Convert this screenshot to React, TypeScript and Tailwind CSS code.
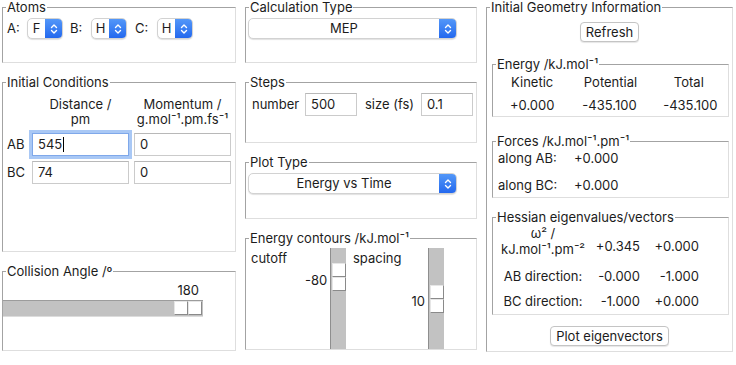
import { clsx } from 'clsx';
import type { ReactNode } from 'react';

const Frame = ({ title, className, children }: { title: ReactNode; className?: string; children?: ReactNode }) => (
  <fieldset
    className={clsx(
      'min-w-0 border border-t-[#a3a3a3] border-l-[#a3a3a3] border-r-[#dedede] border-b-[#dedede]',
      className,
    )}
  >
    <legend className="ml-[3px] px-[1px] leading-[15px]">{title}</legend>
    {children}
  </fieldset>
);

const Chevrons = () => (
  <svg width="8" height="12" viewBox="0 0 8 12" fill="none" stroke="white" strokeWidth="1.4" strokeLinecap="round" strokeLinejoin="round">
    <path d="M1.5 4.5 L4 2 L6.5 4.5" />
    <path d="M1.5 7.5 L4 10 L6.5 7.5" />
  </svg>
);

const Select = ({ value, className }: { value: string; className: string }) => (
  <div
    className={clsx(
      'flex h-[21px] overflow-hidden rounded-[5px] border border-[#d2d2d2] bg-white shadow-[0_1px_1px_rgba(0,0,0,0.12)]',
      className,
    )}
  >
    <span className="flex flex-1 items-center justify-center leading-none">{value}</span>
    <span className="flex w-[17px] items-center justify-center bg-gradient-to-b from-[#5397f8] to-[#2468ee]">
      <Chevrons />
    </span>
  </div>
);

const Field = ({ value, className, focused }: { value: string; className: string; focused?: boolean }) => (
  <div
    className={clsx(
      'flex h-[23px] items-center bg-white pl-[5px]',
      focused
        ? 'border border-[#7fa8ea] ring-[3px] ring-[#a9c8f5]'
        : 'border border-[#cbcbcb] border-t-[#b8b8b8]',
      className,
    )}
  >
    {value}
    {focused && <span className="ml-[1px] h-[15px] w-px bg-black" />}
  </div>
);

const Thumb = ({ vertical }: { vertical?: boolean }) => (
  <div className={clsx('flex', vertical ? 'flex-col' : 'flex-row')}>
    <span className="block h-[14px] w-[14px] border border-t-[#e6e6e6] border-l-[#e6e6e6] border-r-[#8a8a8a] border-b-[#8a8a8a] bg-white" />
    <span className="block h-[14px] w-[14px] border border-t-[#e6e6e6] border-l-[#e6e6e6] border-r-[#8a8a8a] border-b-[#8a8a8a] bg-white" />
  </div>
);

const VScale = ({ offset }: { offset: string }) => (
  <div className="mt-[2px] flex h-[101px] w-[16px] flex-col items-center border-l border-l-[#8e8e8e] bg-[#c2c2c2]">
    <div className={offset}>
      <Thumb vertical />
    </div>
  </div>
);

const Button = ({ label, className }: { label: string; className?: string }) => (
  <div
    className={clsx(
      'mx-auto flex h-[20px] items-center rounded-[4px] border border-[#c4c4c4] bg-white px-[5px] shadow-[0_1px_1px_rgba(0,0,0,0.1)]',
      className,
    )}
  >
    {label}
  </div>
);

export default function App() {
  return (
    <div className="flex h-[365px] w-[736px] bg-white pl-[2px] font-['Inter','Liberation_Sans',Arial,sans-serif] text-[13px] leading-[15px] text-[#1c1c1c]">
      {/* left column */}
      <div className="flex w-[234px] flex-col">
        <Frame title="Atoms" className="h-[63px]">
          <div className="mt-[3px] flex items-center pl-[4px]">
            <span className="w-[20px]">A:</span>
            <Select value="F" className="w-[36px]" />
            <span className="ml-[7px] w-[21px]">B:</span>
            <Select value="H" className="w-[36px]" />
            <span className="ml-[8px] w-[22px]">C:</span>
            <Select value="H" className="w-[36px]" />
          </div>
        </Frame>

        <Frame title="Initial Conditions" className="mt-[12px] h-[177px]">
          <div className="grid grid-cols-[24px_97px_97px] gap-x-[5px] pt-[7px]">
            <span />
            <span className="text-center">
              Distance /<br />
              pm
            </span>
            <span className="text-center">
              Momentum /<br />
              g.mol⁻¹.pm.fs⁻¹
            </span>
          </div>
          <div className="mt-[6px] grid grid-cols-[24px_97px_97px] gap-x-[5px] gap-y-[5px]">
            <span className="flex items-center pl-[4px]">AB</span>
            <Field value="545" className="w-[97px]" focused />
            <Field value="0" className="w-[97px]" />
            <span className="flex items-center pl-[4px]">BC</span>
            <Field value="74" className="w-[97px]" />
            <Field value="0" className="w-[97px]" />
          </div>
        </Frame>

        <Frame title="Collision Angle /º" className="mt-[12px] h-[87px]">
          <div className="w-[200px]">
            <div className="pt-[4px] pr-[4px] text-right">180</div>
            <div className="mt-[2px] flex h-[17px] w-[200px] items-start justify-end border-t border-t-[#9c9c9c] border-b border-b-[#dcdcdc] bg-[#c2c2c2] pr-[1px]">
              <Thumb />
            </div>
          </div>
        </Frame>
      </div>

      {/* middle column */}
      <div className="ml-[9px] flex w-[232px] flex-col">
        <Frame title="Calculation Type" className="h-[63px]">
          <Select value="MEP" className="mt-[3px] ml-[2px] w-[209px]" />
        </Frame>

        <Frame title="Steps" className="mt-[12px] h-[68px]">
          <div className="mt-[3px] flex items-center">
            <span className="w-[59px] pl-[6px]">number</span>
            <Field value="500" className="w-[52px]" />
            <span className="ml-[8px] w-[56px]">size (fs)</span>
            <Field value="0.1" className="w-[52px]" />
          </div>
        </Frame>

        <Frame title="Plot Type" className="mt-[12px] h-[64px]">
          <Select value="Energy vs Time" className="mt-[3px] ml-[2px] w-[209px]" />
        </Frame>

        <Frame title="Energy contours /kJ.mol⁻¹" className="mt-[12px] h-[119px]">
          <div className="flex items-start">
            <span className="w-[59px] pt-[5px] pl-[5px]">cutoff</span>
            <span className="w-[22px] pt-[27px] text-right">-80</span>
            <div className="ml-[3px]">
              <VScale offset="mt-[15px]" />
            </div>
            <span className="ml-[7px] w-[52px] pt-[5px]">spacing</span>
            <span className="w-[20px] pt-[48px] text-right">10</span>
            <div className="ml-[3px]">
              <VScale offset="mt-[37px]" />
            </div>
          </div>
        </Frame>
      </div>

      {/* right column */}
      <Frame title="Initial Geometry Information" className="ml-[9px] h-[352px] w-[247px]">
        <Button label="Refresh" className="mt-[7px] w-fit" />

        <Frame title="Energy /kJ.mol⁻¹" className="mt-[15px] ml-[5px] h-[60px] w-[237px]">
          <div className="grid grid-cols-3 pt-[3px] text-center">
            <span className="h-[23px]">Kinetic</span>
            <span>Potential</span>
            <span>Total</span>
            <span>+0.000</span>
            <span className="-ml-[2px]">-435.100</span>
            <span className="ml-[3px]">-435.100</span>
          </div>
        </Frame>

        <Frame title="Forces /kJ.mol⁻¹.pm⁻¹" className="mt-[17px] ml-[5px] h-[64px] w-[237px]">
          <div className="grid grid-cols-[76px_1fr] gap-y-[12px] pt-[2px] pl-[5px]">
            <span>along AB:</span>
            <span>+0.000</span>
            <span>along BC:</span>
            <span>+0.000</span>
          </div>
        </Frame>

        <Frame title="Hessian eigenvalues/vectors" className="mt-[12px] ml-[5px] h-[105px] w-[237px]">
          <div className="grid grid-cols-[90px_52px_59px] pl-[5px] text-center">
            <span className="leading-[16px]">
              ω² /<br />
              kJ.mol⁻¹.pm⁻²
            </span>
            <span className="pt-[14px] text-right">+0.345</span>
            <span className="pt-[14px] text-right">+0.000</span>
            <span className="mt-[12px]">AB direction:</span>
            <span className="mt-[12px] text-right">-0.000</span>
            <span className="mt-[12px] text-right">-1.000</span>
            <span className="mt-[10px]">BC direction:</span>
            <span className="mt-[10px] text-right">-1.000</span>
            <span className="mt-[10px] text-right">+0.000</span>
          </div>
        </Frame>

        <Button label="Plot eigenvectors" className="mt-[11px] w-fit" />
      </Frame>
    </div>
  );
}
